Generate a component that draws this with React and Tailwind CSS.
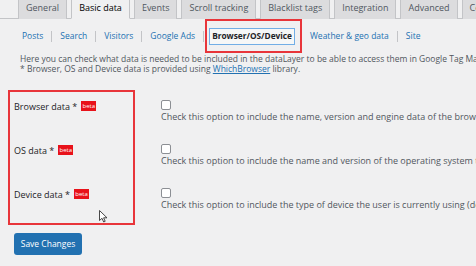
import React from 'react';

const tabs = ['General', 'Basic data', 'Events', 'Scroll tracking', 'Blacklist tags', 'Integration', 'Advanced', 'Cookie'];

const subLinks = ['Posts', 'Search', 'Visitors', 'Google Ads'];

const rows = [
  { label: 'Browser data', desc: 'Check this option to include the name, version and engine data of the browser the visitor uses.' },
  { label: 'OS data', desc: 'Check this option to include the name and version of the operating system the visitor uses.' },
  { label: 'Device data', desc: 'Check this option to include the type of device the user is currently using (desktop, tablet or mobile).' },
];

function Beta() {
  return (
    <span className="ml-[4px] inline-flex h-[10px] w-[15px] items-center justify-center bg-[#e8121a] text-[6px] leading-none text-white">
      beta
    </span>
  );
}

export default function App() {
  return (
    <div
      className="relative h-[266px] w-[476px] overflow-hidden bg-[#f0f0f1] text-[8.5px] text-[#1d2327]"
      style={{ fontFamily: '"Open Sans", "Noto Sans", sans-serif' }}
    >
      {/* tabs */}
      <div className="flex h-[19px] whitespace-nowrap border-b border-[#c3c4c7] pl-[18px]">
        {tabs.map((t, i) => (
          <div
            key={t}
            className={
              'mr-[4px] flex h-[19px] shrink-0 items-start border-x border-[#c3c4c7] px-[7px] text-[9px] leading-[16px] ' +
              (i === 1 ? 'bg-[#f0f0f1] text-[#000] border-b border-b-[#f0f0f1]' : 'bg-[#dcdcde] text-[#50575e]')
            }
          >
            {t}
          </div>
        ))}
      </div>

      {/* sub navigation */}
      <div className="relative flex h-[34px] items-center whitespace-nowrap pl-[22px] text-[8.5px]">
        {subLinks.map((l) => (
          <React.Fragment key={l}>
            <span className="text-[#2271b1]">{l}</span>
            <span className="mx-[8px] h-[11px] w-px bg-[#c3c4c7]" />
          </React.Fragment>
        ))}
        <span className="ml-[-3px] flex h-[17px] items-center border border-[#72aee6] bg-[#f6f7f7] px-[2px] text-[8.3px] font-bold text-[#1d2327]">
          Browser/OS/Device
        </span>
        <span className="ml-[5px] h-[11px] w-px bg-[#c3c4c7]" />
        <span className="ml-[9px] text-[#2271b1]">Weather &amp; geo data</span>
        <span className="mx-[8px] h-[11px] w-px bg-[#c3c4c7]" />
        <span className="text-[#2271b1]">Site</span>
        <div className="absolute left-[205px] top-0 h-[34px] w-[97px] border-2 border-[#e8353a]" />
      </div>

      {/* intro */}
      <div className="whitespace-nowrap pl-[20px] pt-[1px] text-[8.5px] leading-[10px] text-[#50575e]">
        <p>Here you can check what data is needed to be included in the dataLayer to be able to access them in Google Tag Manager.</p>
        <p>
          * Browser, OS and Device data is provided using{' '}
          <span className="text-[#2271b1] underline">WhichBrowser</span> library.
        </p>
      </div>

      {/* form table */}
      <div className="relative mt-[26px] flex flex-col gap-[21px] whitespace-nowrap">
        {rows.map((r) => (
          <div key={r.label} className="flex">
            <div className="flex w-[161px] shrink-0 items-start pl-[14px] pt-[1px] text-[9px] leading-[12px] text-[#1d2327]">
              {r.label} *<Beta />
            </div>
            <div className="flex flex-col">
              <span className="block h-[10px] w-[10px] rounded-[2px] border border-[#8c8f94] bg-white" />
              <span className="mt-[1px] text-[9px] leading-[12px] text-[#50575e]">{r.desc}</span>
            </div>
          </div>
        ))}
        <div className="absolute left-[8px] top-[-10px] h-[135px] w-[127px] border-2 border-[#e8353a]" />
      </div>

      <div className="pl-[14px] pt-[22px]">
        <button
          type="button"
          className="flex h-[22px] w-[68px] items-center justify-center rounded-[3px] bg-[#2271b1] text-[8.5px] text-white"
        >
          Save Changes
        </button>
      </div>

      {/* cursor */}
      <svg className="absolute left-[99px] top-[210px]" width="9" height="13" viewBox="0 0 9 13">
        <path d="M0.5 0.5 L0.5 10.5 L3 8.3 L4.7 12 L6.2 11.3 L4.6 7.8 L8 7.8 Z" fill="#fff" stroke="#333" strokeWidth="0.9" strokeLinejoin="round" />
      </svg>
    </div>
  );
}
